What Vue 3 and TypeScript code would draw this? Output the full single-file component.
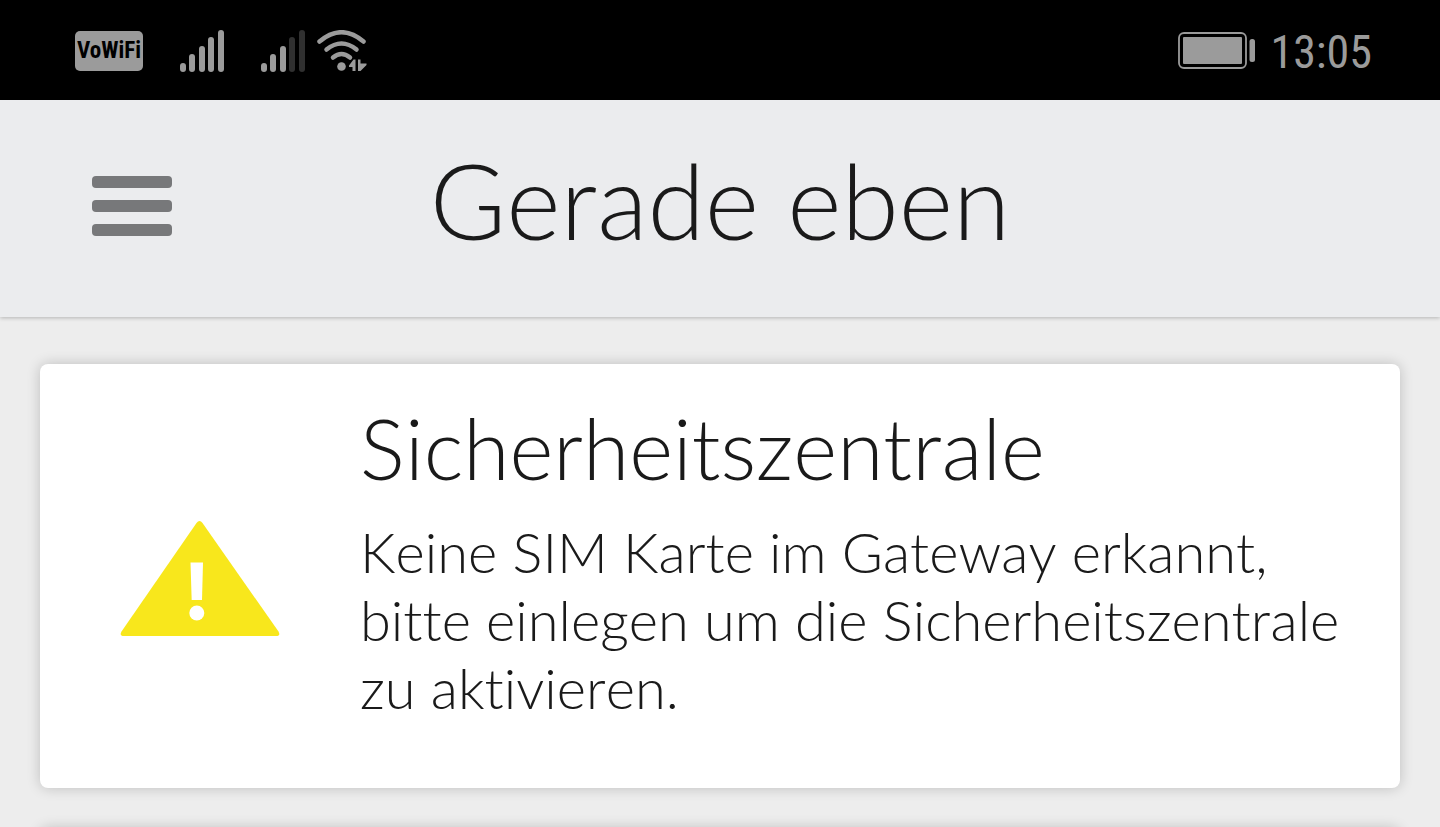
<script setup lang="ts">
interface Message {
  id: number
  title: string
  text: string
}

const messages: Message[] = [
  {
    id: 1,
    title: 'Sicherheitszentrale',
    text: 'Keine SIM Karte im Gateway erkannt, bitte einlegen um die Sicherheitszentrale zu aktivieren.',
  },
]

const bars = [
  { x: 0, y: 33, h: 9 },
  { x: 9, y: 24, h: 18 },
  { x: 19, y: 16, h: 26 },
  { x: 28, y: 7, h: 35 },
  { x: 38, y: 0, h: 42 },
]
</script>

<template>
  <div class="screen">
    <div class="status">
      <div class="status-left">
        <span class="vowifi">VoWiFi</span>
        <svg class="signal" width="44" height="42" viewBox="0 0 44 42" role="img" aria-label="SIM 1">
          <rect v-for="b in bars" :key="b.x" :x="b.x" :y="b.y" width="6" :height="b.h" rx="3" fill="#9b9b9b" />
        </svg>
        <svg class="signal second" width="44" height="42" viewBox="0 0 44 42" role="img" aria-label="SIM 2">
          <rect
            v-for="(b, i) in bars"
            :key="b.x"
            :x="b.x"
            :y="b.y"
            width="6"
            :height="b.h"
            rx="3"
            :fill="i < 3 ? '#9b9b9b' : '#303030'"
          />
        </svg>
        <svg class="wifi" width="50" height="42" viewBox="0 0 50 42" role="img" aria-label="WLAN">
          <g fill="none" stroke="#9b9b9b" stroke-width="4.5" stroke-linecap="round">
            <path d="M2.5 11.5Q24.5 -7 46.5 11.5" />
            <path d="M9.5 19.5Q24.5 7.5 39.5 19.5" />
            <path d="M16 27.5Q24.5 20.5 33 27.5" />
          </g>
          <circle cx="24.5" cy="36.5" r="4.3" fill="#9b9b9b" />
          <path d="M36.5 29.5H38.5V41H35.5V37H32V35.5ZM41 29.5H43.5V33.5H49.5V35L43.5 41H41Z" fill="#9b9b9b" />
        </svg>
      </div>
      <div class="status-right">
        <svg width="78" height="38" viewBox="0 0 78 38" role="img" aria-label="Akku">
          <rect x="1" y="1" width="67" height="35" rx="5" fill="none" stroke="#9b9b9b" stroke-width="1.8" />
          <rect x="5" y="5" width="59" height="27" rx="1" fill="#9b9b9b" />
          <rect x="71.5" y="7" width="5.5" height="23" rx="2.5" fill="#9b9b9b" />
        </svg>
        <time class="clock">13:05</time>
      </div>
    </div>

    <header class="bar">
      <button class="menu" type="button" aria-label="Menü">
        <span></span>
        <span></span>
        <span></span>
      </button>
      <h1>Gerade eben</h1>
    </header>

    <main class="list">
      <article v-for="m in messages" :key="m.id" class="card">
        <svg class="warn" width="160" height="118" viewBox="0 0 160 118" role="img" aria-label="Warnung">
          <path
            d="M76.5 3Q79.5 -1 82.5 3L158.5 111.5Q161 116 156 116H4Q-1 116 1.5 111.5Z"
            fill="#f8e71c"
          />
          <path d="M70.5 42.500H83L82 80H71.700Z" fill="#fff" />
          <circle cx="76.8" cy="93" r="7.500" fill="#fff" />
        </svg>
        <div class="body">
          <h2>{{ m.title }}</h2>
          <p>{{ m.text }}</p>
        </div>
      </article>
      <article class="card"></article>
    </main>
  </div>
</template>

<style>
html,
body {
  margin: 0;
  background: #ededed;
}
</style>

<style scoped>
.screen {
  height: 100vh;
  overflow: hidden;
  background: #ededed;
  color: #1a1a1a;
  font-family: Lato, 'Liberation Sans', sans-serif;
  font-kerning: none;
  font-variant-ligatures: none;
}

.status {
  display: flex;
  justify-content: space-between;
  align-items: center;
  box-sizing: border-box;
  height: 100px;
  padding: 2px 68px 0 75px;
  background: #000;
  color: #9b9b9b;
}

.status-left,
.status-right {
  display: flex;
  align-items: center;
}

.vowifi {
  width: 68px;
  margin-right: 37px;
  border-radius: 5px;
  background: #9b9b9b;
  color: #000;
  font: 700 23px/40px 'Roboto Condensed', Roboto, sans-serif;
  text-align: center;
}

.second {
  margin-left: 37px;
}

.wifi {
  margin-left: 12px;
}

.status-right {
  gap: 14px;
}

.clock {
  padding-top: 2px;
  font: 400 46px/56px 'Roboto Condensed', Roboto, sans-serif;
}

.bar {
  position: relative;
  display: grid;
  grid-template-columns: 80px 1fr 80px;
  align-items: center;
  box-sizing: border-box;
  height: 217px;
  padding: 0 92px 6px;
  background: #ebecee;
  box-shadow: 0 1px 4px rgba(0, 0, 0, 0.24);
}

.menu {
  display: flex;
  flex-direction: column;
  gap: 12px;
  padding: 0;
  border: 0;
  background: none;
}

.menu span {
  width: 80px;
  height: 12px;
  border-radius: 4px;
  background: #77787a;
}

h1,
h2,
p {
  margin: 0;
  font-weight: 300;
}

h1 {
  padding-bottom: 12px;
  font-size: 104px;
  line-height: 124px;
  text-align: center;
}

.list {
  display: flex;
  flex-direction: column;
  gap: 40px;
  padding: 47px 40px;
}

.card {
  display: flex;
  align-items: flex-start;
  box-sizing: border-box;
  min-height: 424px;
  padding: 34px 40px 64px 80px;
  border-radius: 8px;
  background: #fff;
  box-shadow: 0 0 14px rgba(0, 0, 0, 0.2);
}

.warn {
  flex: none;
  margin: 122px 80px 0 0;
}

h2 {
  margin-bottom: 20px;
  font-size: 84px;
  line-height: 100px;
}

p {
  font-size: 56px;
  line-height: 68px;
}
</style>
